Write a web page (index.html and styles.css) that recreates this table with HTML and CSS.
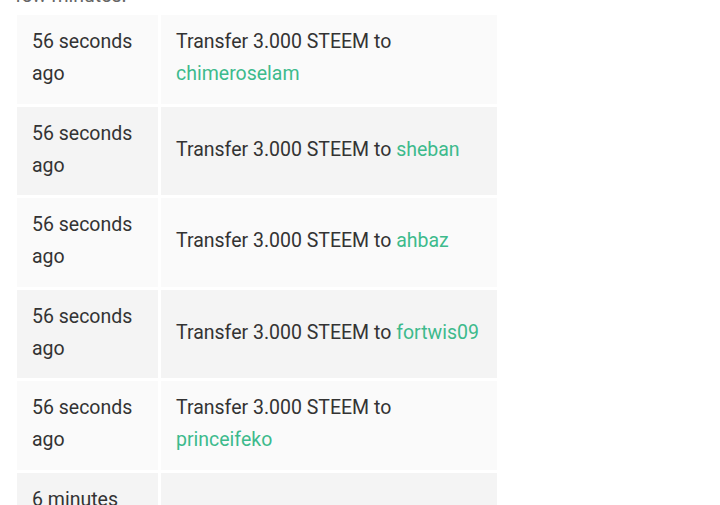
FILE: index.html
```html
<!DOCTYPE html>
<html lang="en">
<head>
  <meta charset="UTF-8" />
  <meta name="viewport" content="width=device-width, initial-scale=1" />
  <title>Wallet history</title>
  <link rel="stylesheet" href="styles.css">
</head>
<body>
  <div class="page">
    <p class="note">few minutes.</p>
    <table class="history">
      <tr>
        <td class="when">56 seconds ago</td>
        <td class="what">Transfer 3.000 STEEM to <a href="#">chimeroselam</a></td>
      </tr>
      <tr>
        <td class="when">56 seconds ago</td>
        <td class="what">Transfer 3.000 STEEM to <a href="#">sheban</a></td>
      </tr>
      <tr>
        <td class="when">56 seconds ago</td>
        <td class="what">Transfer 3.000 STEEM to <a href="#">ahbaz</a></td>
      </tr>
      <tr>
        <td class="when">56 seconds ago</td>
        <td class="what">Transfer 3.000 STEEM to <a href="#">fortwis09</a></td>
      </tr>
      <tr>
        <td class="when">56 seconds ago</td>
        <td class="what">Transfer 3.000 STEEM to <a href="#">princeifeko</a></td>
      </tr>
      <tr>
        <td class="when">6 minutes ago</td>
        <td class="what"></td>
      </tr>
    </table>
  </div>
</body>
</html>
```

FILE: styles.css
```css
body {
  margin: 0;
  font-family: Roboto, "Noto Sans", sans-serif;
  background-color: #fff;
  color: #333;
}
.page {
  margin-top: -20px;
  padding-left: 14px;
  width: 486px;
}
.note {
  margin: 0;
  padding-left: 1px;
  font-size: 19.5px;
  line-height: 32px;
  color: #666;
}
.history {
  border-spacing: 3px;
  width: 486px;
  font-size: 19.5px;
  line-height: 32px;
}
.history td {
  padding: 11px 14px 13.5px 15px;
  vertical-align: middle;
}
.history tr:nth-child(odd) td {
  background-color: #fafafa;
}
.history tr:nth-child(even) td {
  background-color: #f4f4f4;
}
.when {
  width: 112px;
}
.what a {
  color: #3dba8c;
  text-decoration: none;
}
```
